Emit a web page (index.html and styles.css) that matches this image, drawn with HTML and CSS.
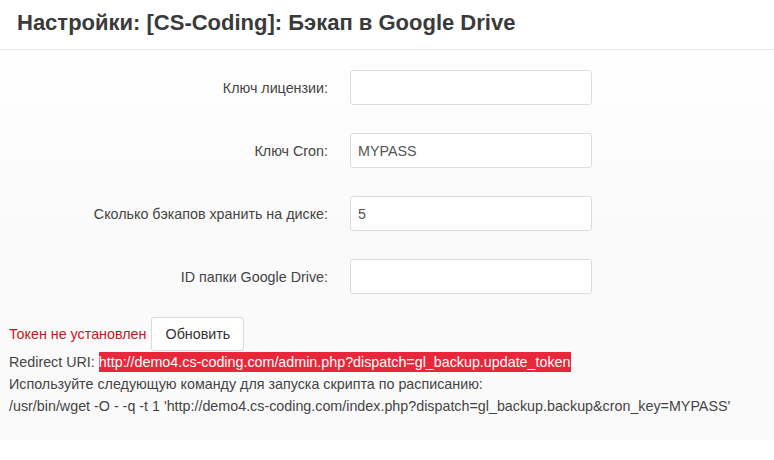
FILE: index.html
```html
<!DOCTYPE html>
<html lang="ru">
<head>
<meta charset="utf-8">
<title>Настройки</title>
<link rel="stylesheet" href="styles.css">
</head>
<body>
<header class="page-head">
  <h1 class="page-title">Настройки: [CS-Coding]: Бэкап в Google Drive</h1>
</header>
<main class="content">
  <form class="settings">
    <div class="row">
      <label class="label" for="f1">Ключ лицензии:</label>
      <input class="field" id="f1" type="text" value="">
    </div>
    <div class="row">
      <label class="label" for="f2">Ключ Cron:</label>
      <input class="field" id="f2" type="text" value="MYPASS">
    </div>
    <div class="row">
      <label class="label" for="f3">Сколько бэкапов хранить на диске:</label>
      <input class="field" id="f3" type="text" value="5">
    </div>
    <div class="row">
      <label class="label" for="f4">ID папки Google Drive:</label>
      <input class="field" id="f4" type="text" value="">
    </div>
  </form>
  <div class="info">
    <div class="token">
      <span class="token-status">Токен не установлен</span>
      <button class="btn" type="button">Обновить</button>
    </div>
    <p class="line">Redirect URI: <span class="uri">http://demo4.cs-coding.com/admin.php?dispatch=gl_backup.update_token</span></p>
    <p class="line">Используйте следующую команду для запуска скрипта по расписанию:</p>
    <p class="line">/usr/bin/wget -O - -q -t 1 'http://demo4.cs-coding.com/index.php?dispatch=gl_backup.backup&amp;cron_key=MYPASS'</p>
  </div>
</main>
</body>
</html>
```

FILE: styles.css
```css
html, body {
  margin: 0;
  padding: 0;
  background: #ffffff;
}
body {
  font-family: "Liberation Sans", Arial, sans-serif;
  color: #444;
}
.page-head {
  height: 50px;
  border-bottom: 1px solid #e8e8e8;
  box-sizing: border-box;
  padding: 0 17px;
  display: flex;
  align-items: center;
}
.page-title {
  margin: 0;
  font-size: 22px;
  font-weight: bold;
  color: #3a3a3a;
  position: relative;
  top: -2px;
}
.content {
  height: 390px;
  background: linear-gradient(to bottom, #ffffff 0%, #fafafa 45%, #fafafa 100%);
  padding-top: 20px;
  box-sizing: border-box;
}
.settings {
  display: flex;
  flex-direction: column;
  gap: 28px;
  margin: 0;
}
.row {
  display: grid;
  grid-template-columns: 328px 242px;
  column-gap: 22px;
  align-items: center;
  height: 35px;
}
.label {
  text-align: right;
  font-size: 14.3px;
  color: #444;
}
.field {
  height: 35px;
  box-sizing: border-box;
  border: 1px solid #dcdcdc;
  border-radius: 3px;
  background: #fff;
  padding: 0 7px;
  font-family: "Liberation Sans", Arial, sans-serif;
  font-size: 14.3px;
  color: #555;
}
.info {
  padding: 23px 9px 0;
}
.token {
  display: flex;
  align-items: center;
  gap: 5px;
  height: 34px;
}
.token-status {
  color: #c4171f;
  font-size: 14.3px;
}
.btn {
  height: 34px;
  width: 93px;
  padding: 0;
  border: 1px solid #dadada;
  border-radius: 3px;
  background: #fff;
  font-family: "Liberation Sans", Arial, sans-serif;
  font-size: 14.3px;
  color: #333;
}
.line {
  margin: 0;
  font-size: 14.3px;
  line-height: 22px;
  color: #444;
}
.uri {
  background: #e8283a;
  color: #fff;
  padding: 2px 0;
}
```
